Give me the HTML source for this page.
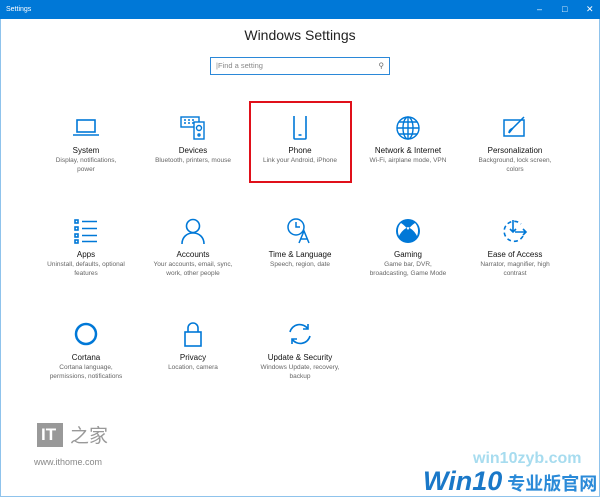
<!DOCTYPE html>
<html style="overflow:hidden;height:497px"><head><meta charset="utf-8"><style>
*{margin:0;padding:0;box-sizing:border-box}
body{width:600px;height:497px;background:#fff;font-family:"Liberation Sans",sans-serif;position:relative;overflow:hidden}
.win{position:absolute;left:0;top:0;width:600px;height:497px;border:1px solid #8fc3ec;border-top:none}
.bar{position:absolute;left:0;top:0;width:600px;height:19px;background:#0078d7;color:#fff;font-size:7px;line-height:19px;padding-left:6px}
.ctl{position:absolute;top:0;color:#fff;font-size:9px;line-height:19px}
h1{position:absolute;top:27px;width:600px;text-align:center;font-weight:normal;font-size:14px;color:#222}
.search{position:absolute;left:210px;top:57px;width:180px;height:18px;border:1px solid #2b88d8;font-size:7.5px;color:#888;line-height:16px;padding-left:5px}
.item{position:absolute;width:100px;text-align:center}
.item svg{display:block;margin:0 auto}
.t{font-size:8px;color:#111;margin-top:6px;line-height:10px}
.s{font-size:6.5px;color:#666;line-height:9px}
.red{position:absolute;left:249px;top:101px;width:103px;height:82px;border:2px solid #e0101a}
</style></head><body>
<div class="win"></div>
<div class="bar">Settings</div>
<div class="ctl" style="left:537px">&#8211;</div>
<div class="ctl" style="left:562px">&#9633;</div>
<div class="ctl" style="left:586px">&#10005;</div>
<h1>Windows Settings</h1>
<div class="search">|Find a setting<span style="position:absolute;right:5px;color:#666">&#9906;</span></div>
<div class="red"></div>

<div class="item" style="left:36px;top:116px"><svg width="28" height="24" viewBox="0 0 28 24" fill="none" stroke="#0078d7" stroke-width="1.6"><rect x="5" y="4" width="18" height="12"/><path d="M1 19h26"/></svg><div class="t">System</div><div class="s">Display, notifications,<br>power</div></div>
<div class="item" style="left:143px;top:116px"><svg width="28" height="24" viewBox="0 0 28 24" fill="none" stroke="#0078d7" stroke-width="1.4"><rect x="2" y="1" width="18" height="10"/><path d="M5 4h2M9 4h2M13 4h2M5 7h2M9 7h2M13 7h2"/><rect x="15" y="6" width="10" height="17" fill="#fff"/><circle cx="20" cy="12" r="2.5"/><circle cx="20" cy="19" r="1"/></svg><div class="t">Devices</div><div class="s">Bluetooth, printers, mouse</div></div>
<div class="item" style="left:250px;top:116px"><svg width="28" height="24" viewBox="0 0 28 24" fill="none" stroke="#0078d7" stroke-width="1.6"><rect x="8" y="-1" width="12" height="24" rx="1"/><path d="M12.5 19h3"/></svg><div class="t">Phone</div><div class="s">Link your Android, iPhone</div></div>
<div class="item" style="left:358px;top:116px"><svg width="28" height="24" viewBox="0 0 28 24" fill="none" stroke="#0078d7" stroke-width="1.4"><circle cx="14" cy="12" r="11"/><ellipse cx="14" cy="12" rx="5" ry="11"/><path d="M3 12h22M5 6h18M5 18h18M14 1v22"/></svg><div class="t">Network &amp; Internet</div><div class="s">Wi-Fi, airplane mode, VPN</div></div>
<div class="item" style="left:465px;top:116px"><svg width="28" height="24" viewBox="0 0 28 24" fill="none" stroke="#0078d7" stroke-width="1.5"><rect x="3" y="4" width="20" height="16"/><path d="M8 17l4-5 11-11" /><path d="M8 17c0-3 2-4 4-5"/></svg><div class="t">Personalization</div><div class="s">Background, lock screen,<br>colors</div></div>

<div class="item" style="left:36px;top:218px"><svg width="28" height="26" viewBox="0 0 28 26" fill="none" stroke="#0078d7" stroke-width="1.6"><rect x="3" y="2" width="3" height="3"/><rect x="3" y="9" width="3" height="3"/><rect x="3" y="16" width="3" height="3"/><rect x="3" y="22" width="3" height="3"/><path d="M10 3.5h15M10 10.5h15M10 17.5h15M10 23.5h15"/></svg><div class="t">Apps</div><div class="s">Uninstall, defaults, optional<br>features</div></div>
<div class="item" style="left:143px;top:218px"><svg width="28" height="26" viewBox="0 0 28 26" fill="none" stroke="#0078d7" stroke-width="1.6"><circle cx="14" cy="8" r="6.5"/><path d="M3 26c0-7 5-11 11-11s11 4 11 11"/></svg><div class="t">Accounts</div><div class="s">Your accounts, email, sync,<br>work, other people</div></div>
<div class="item" style="left:250px;top:218px"><svg width="28" height="26" viewBox="0 0 28 26" fill="none" stroke="#0078d7" stroke-width="1.5"><circle cx="10" cy="9" r="8"/><path d="M10 4v5h4"/><path d="M13 25l5-12 5 12M15 21h6"/></svg><div class="t">Time &amp; Language</div><div class="s">Speech, region, date</div></div>
<div class="item" style="left:358px;top:218px"><svg width="28" height="26" viewBox="0 0 28 26" fill="#0078d7"><circle cx="14" cy="13" r="12"/><path d="M7 5c3 2 5 4 7 7 2-3 4-5 7-7 3 3 4 8 2 13-2-4-5-7-9-9-4 2-7 5-9 9-2-5-1-10 2-13z" fill="#fff"/><path d="M14 12c3 3 5 6 6 10-2 1-4 2-6 2s-4-1-6-2c1-4 3-7 6-10z" fill="#0078d7"/></svg><div class="t">Gaming</div><div class="s">Game bar, DVR,<br>broadcasting, Game Mode</div></div>
<div class="item" style="left:465px;top:218px"><svg width="28" height="26" viewBox="0 0 28 26" fill="none" stroke="#0078d7" stroke-width="1.6"><path d="M22 18a10 10 0 1 1-2-12" stroke-dasharray="4 3"/><path d="M12 2v12M9 11l3 3 3-3M14 14h11M22 11l3 3-3 3"/></svg><div class="t">Ease of Access</div><div class="s">Narrator, magnifier, high<br>contrast</div></div>

<div class="item" style="left:36px;top:321px"><svg width="28" height="26" viewBox="0 0 28 26" fill="none" stroke="#0078d7" stroke-width="2.5"><circle cx="14" cy="13" r="10"/></svg><div class="t">Cortana</div><div class="s">Cortana language,<br>permissions, notifications</div></div>
<div class="item" style="left:143px;top:321px"><svg width="28" height="26" viewBox="0 0 28 26" fill="none" stroke="#0078d7" stroke-width="1.6"><path d="M9 11V7a5 5 0 0 1 10 0v4"/><rect x="6" y="11" width="16" height="14"/></svg><div class="t">Privacy</div><div class="s">Location, camera</div></div>
<div class="item" style="left:250px;top:321px"><svg width="28" height="26" viewBox="0 0 28 26" fill="none" stroke="#0078d7" stroke-width="1.6"><path d="M4 11a10 10 0 0 1 18-3M24 15a10 10 0 0 1-18 3"/><path d="M22 3v5h-5M6 23v-5h5"/></svg><div class="t">Update &amp; Security</div><div class="s">Windows Update, recovery,<br>backup</div></div>

<div style="position:absolute;left:37px;top:423px;width:26px;height:24px;background:#999"></div>
<div style="position:absolute;left:41px;top:425px;color:#fff;font-weight:bold;font-size:17px;line-height:20px;font-family:'Liberation Sans',sans-serif">IT</div>
<div style="position:absolute;left:70px;top:421px;color:#999;font-size:19px;font-family:'Liberation Sans','Noto Sans CJK SC',sans-serif">之家</div>
<div style="position:absolute;left:34px;top:457px;color:#888;font-size:9px">www.ithome.com</div>
<div style="position:absolute;left:473px;top:450px;color:#a7dcef;font-size:16px;font-weight:bold">win10zyb.com</div>
<div style="position:absolute;left:423px;top:466px;color:#1a78c8;font-size:27px;font-weight:bold;font-style:italic;line-height:30px;white-space:nowrap;font-family:'Liberation Sans','Noto Sans CJK SC',sans-serif">Win10<span style="font-style:normal;font-size:18px;color:#2a8ad8"> 专业版官网</span></div>
</body></html>
